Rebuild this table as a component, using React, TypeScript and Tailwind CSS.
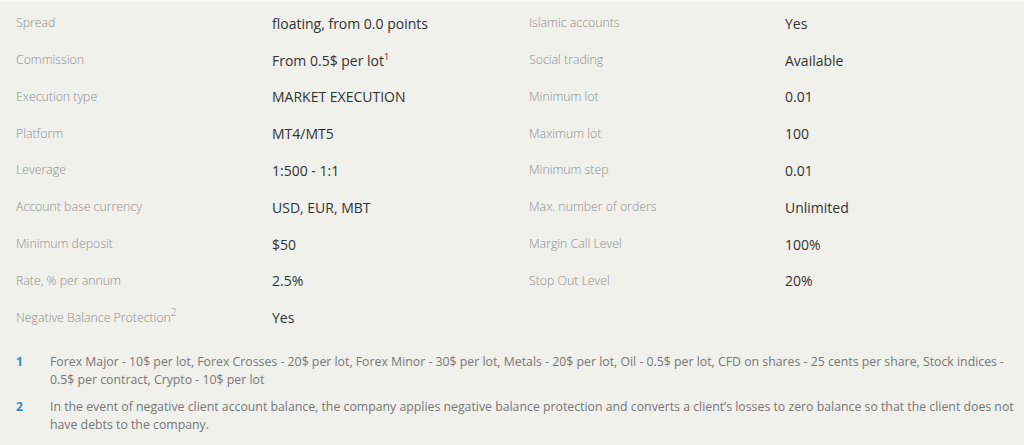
import type { ReactNode } from "react";

type Row = { label: ReactNode; value: ReactNode };

const left: Row[] = [
  { label: "Spread", value: "floating, from 0.0 points" },
  {
    label: "Commission",
    value: (
      <>
        From 0.5$ per lot<sup className="-top-[0.6em] text-[9px]">1</sup>
      </>
    ),
  },
  { label: "Execution type", value: "MARKET EXECUTION" },
  { label: "Platform", value: "MT4/MT5" },
  { label: "Leverage", value: "1:500 - 1:1" },
  { label: "Account base currency", value: "USD, EUR, MBT" },
  { label: "Minimum deposit", value: "$50" },
  { label: "Rate, % per annum", value: "2.5%" },
  {
    label: (
      <>
        Negative Balance Protection<sup className="-top-[0.6em] text-[10px]">2</sup>
      </>
    ),
    value: "Yes",
  },
];

const right: Row[] = [
  { label: "Islamic accounts", value: "Yes" },
  { label: "Social trading", value: "Available" },
  { label: "Minimum lot", value: "0.01" },
  { label: "Maximum lot", value: "100" },
  { label: "Minimum step", value: "0.01" },
  { label: "Max. number of orders", value: "Unlimited" },
  { label: "Margin Call Level", value: "100%" },
  { label: "Stop Out Level", value: "20%" },
];

const notes = [
  "Forex Major - 10$ per lot, Forex Crosses - 20$ per lot, Forex Minor - 30$ per lot, Metals - 20$ per lot, Oil - 0.5$ per lot, CFD on shares - 25 cents per share, Stock indices - 0.5$ per contract, Crypto - 10$ per lot",
  "In the event of negative client account balance, the company applies negative balance protection and converts a client\u2019s losses to zero balance so that the client does not have debts to the company.",
];

function Column({ rows }: { rows: Row[] }) {
  return (
    <div className="flex flex-col">
      {rows.map((row, i) => (
        <div key={i} className="grid h-[36.8px] grid-cols-[256px_1fr] items-center">
          <div className="text-[12.3px] font-light text-[#8f8f8f]">{row.label}</div>
          <div className="text-[14px] text-[#333]">{row.value}</div>
        </div>
      ))}
    </div>
  );
}

export default function App() {
  return (
    <div
      className="h-[445px] w-[1024px] overflow-hidden border-t-2 border-[#f7f7f5] bg-[#f0f0ec]"
      style={{ fontFamily: '"Open Sans", sans-serif' }}
    >
      <div className="grid grid-cols-[513px_1fr] pl-4 pt-[3px]">
        <Column rows={left} />
        <Column rows={right} />
      </div>
      <div className="mt-[17px] flex flex-col gap-[9px] pl-4 pr-[8px]">
        {notes.map((note, i) => (
          <div key={i} className="flex">
            <div className="w-[34px] shrink-0 text-[12px] font-bold leading-[18px] text-[#2b8bd0]">
              {i + 1}
            </div>
            <div className="text-[12.3px] leading-[18px] text-[#777]">{note}</div>
          </div>
        ))}
      </div>
    </div>
  );
}
